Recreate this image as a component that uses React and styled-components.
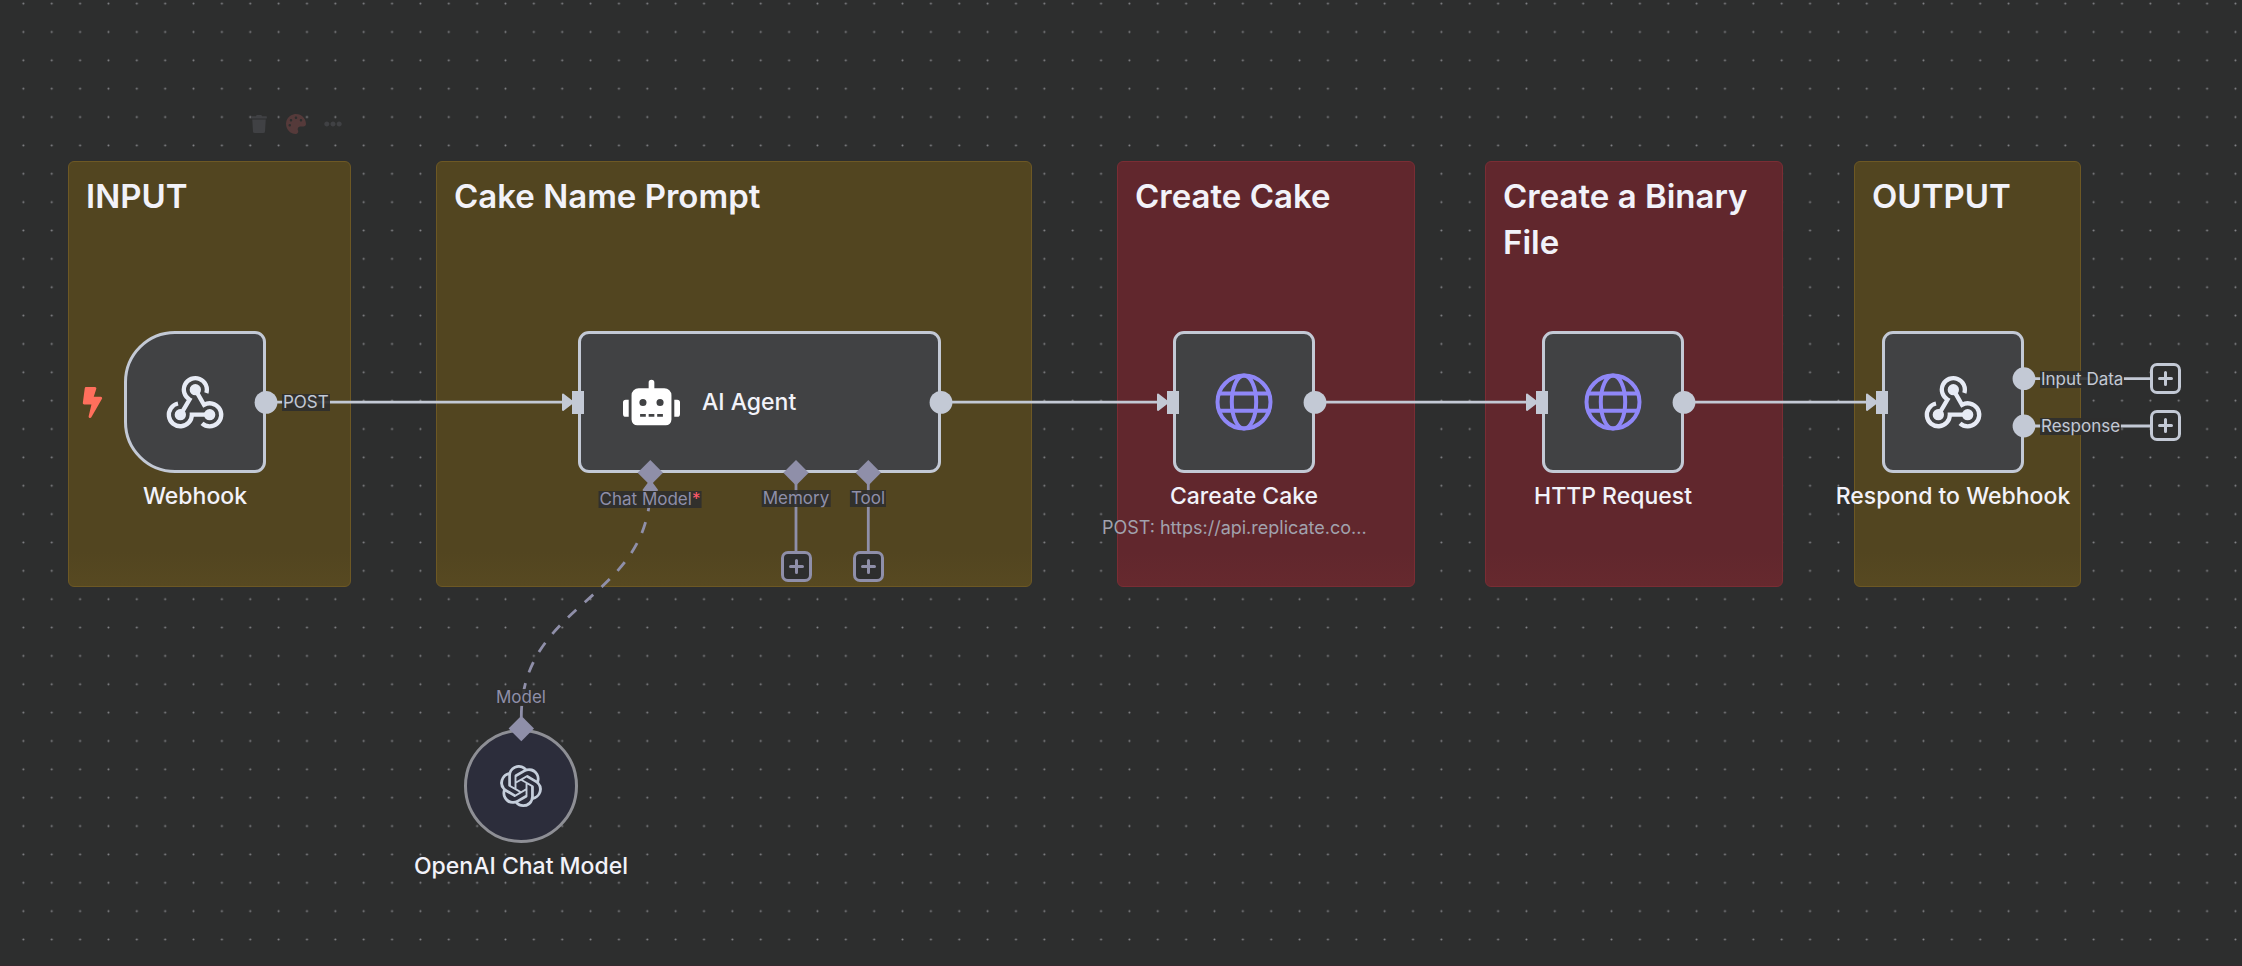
import React from "react";
import styled, { createGlobalStyle } from "styled-components";
import { FaBolt, FaRobot, FaTrash, FaPalette, FaEllipsisH } from "react-icons/fa";
import { SiOpenai } from "react-icons/si";

const GlobalStyle = createGlobalStyle`
  *, *::before, *::after { box-sizing: border-box; }
  body {
    margin: 0;
    background: #2d2e2e;
    font-family: Inter, "Liberation Sans", sans-serif;
  }
`;

const wire = "#c3c9d5";
const aux = "#8f8fa9";

const Canvas = styled.main`
  position: relative;
  width: 100%;
  min-height: 100vh;
  overflow: hidden;
  background: #2d2e2e;
  border-bottom: 1px solid #35292e;
`;

const Layer = styled.svg`
  position: absolute;
  inset: 0;
  width: 100%;
  height: 100%;
  pointer-events: none;
`;

const Placed = styled.div`
  position: absolute;
  left: ${(p) => p.$x}px;
  top: ${(p) => p.$y}px;
`;

const Sticky = styled(Placed).attrs({ as: "section" })`
  width: ${(p) => p.$w}px;
  height: 426px;
  padding: 11px 17px;
  border: 1px solid ${(p) => (p.$red ? "#7a2d34" : "#6d5824")};
  border-radius: 6px;
  background: ${(p) =>
    p.$red
      ? "linear-gradient(#61272d calc(100% - 34px), #66292e)"
      : "linear-gradient(#524520 calc(100% - 34px), #574921)"};
`;

const StickyTitle = styled.h2`
  margin: 0;
  font-size: 33px;
  line-height: 46px;
  font-weight: 600;
  color: #f2f2f9;
`;

const Toolbar = styled(Placed)`
  display: flex;
  gap: 17px;
`;

const ToolButton = styled.button`
  display: grid;
  place-items: center;
  width: 20px;
  height: 20px;
  padding: 0;
  border: 0;
  background: none;
  color: ${(p) => (p.$accent ? "#553a3a" : "#404144")};
  cursor: pointer;
`;

const NodeWrap = styled(Placed)`
  display: flex;
  flex-direction: column;
  align-items: center;
  width: ${(p) => p.$w}px;
`;

const NodeBox = styled.div`
  display: flex;
  align-items: center;
  justify-content: ${(p) => (p.$wide ? "flex-start" : "center")};
  gap: 22px;
  width: 100%;
  height: 142px;
  padding: ${(p) => (p.$wide ? "0 42px" : "0")};
  border: 3px solid ${wire};
  border-radius: ${(p) => (p.$trigger ? "51px 11px 11px 51px" : "11px")};
  background: #414244;
  color: ${(p) => p.$color || "#e7ebf5"};
`;

const RoundBox = styled(NodeBox)`
  height: 114px;
  border: 3px solid #8e8f95;
  border-radius: 50%;
  background: #2c2d3b;
  color: #c5cedb;
`;

const NodeName = styled.div`
  margin-top: ${(p) => (p.$inline ? 0 : 8)}px;
  font-size: 23px;
  line-height: 30px;
  font-weight: 500;
  white-space: nowrap;
  color: #f2f2f9;
`;

const NodeNote = styled.div`
  width: 284px;
  margin-top: 2px;
  font-size: 18px;
  line-height: 30px;
  white-space: nowrap;
  color: #a1a2ad;
`;

const PortLabel = styled(Placed)`
  padding: 0 1px;
  font-size: 17px;
  line-height: 17px;
  white-space: nowrap;
  color: ${(p) => (p.$aux ? aux : wire)};
  background: rgba(45, 46, 46, 0.9);
  transform: ${(p) => (p.$centered ? "translateX(-50%)" : "none")};
`;

const Required = styled.span`
  color: #ff5a6a;
`;

const AddButton = styled(Placed).attrs({ as: "button", type: "button" })`
  display: grid;
  place-items: center;
  width: 31px;
  height: 31px;
  padding: 0;
  border: 3px solid ${(p) => (p.$aux ? aux : wire)};
  border-radius: 7px;
  background: #2d2e2e;
  color: ${(p) => (p.$aux ? aux : wire)};
  cursor: pointer;
`;

const TriggerMark = styled(Placed)`
  display: flex;
  color: #ff6f5c;
`;

const PlusIcon = () => (
  <svg width="15" height="15" viewBox="0 0 15 15" stroke="currentColor" strokeWidth="3" strokeLinecap="round" aria-hidden="true">
    <path d="M7.5 1.5v12M1.5 7.5h12" />
  </svg>
);

const WebhookIcon = () => (
  <svg width="58" height="54" viewBox="319 194 174 162" fill="none" stroke="currentColor" aria-hidden="true">
    <g strokeWidth="13">
      <path d="M440 248A34.500 34.500 0 1 0 389.500 267.500L365 309" />
      <path d="M407 238L433 283.500A34.500 34.500 0 1 1 427 339" />
      <path d="M355 279.500A34.500 34.500 0 1 0 396.500 313H446" />
    </g>
    <g fill="currentColor" stroke="none">
      <circle cx="407" cy="238" r="17" />
      <circle cx="362" cy="313" r="17" />
      <circle cx="450" cy="313" r="17" />
    </g>
  </svg>
);

const GlobeIcon = () => (
  <svg width="58" height="58" viewBox="0 0 58 58" fill="none" stroke="currentColor" strokeWidth="4" aria-hidden="true">
    <circle cx="29" cy="29" r="26.500" />
    <ellipse cx="29" cy="29" rx="12.200" ry="26.500" />
    <path d="M5 20.400h48M5 37.800h48" />
  </svg>
);

const Grid = () => (
  <Layer aria-hidden="true">
    <defs>
      <pattern id="dots" width="28.36" height="28.36" x="9.2" y="17.8" patternUnits="userSpaceOnUse">
        <circle cx="14.180" cy="14.180" r="1" fill="#85868a" />
      </pattern>
    </defs>
    <rect width="100%" height="100%" fill="url(#dots)" />
  </Layer>
);

const links = [
  { from: 266, to: 578 },
  { from: 941, to: 1173 },
  { from: 1315, to: 1542 },
  { from: 1684, to: 1882 },
];

const Edges = () => (
  <Layer aria-hidden="true">
    <g stroke={wire} strokeWidth="2.800" fill="none">
      {links.map((l) => (
        <path key={l.from} d={`M${l.from} 402.200H${l.to - 10}`} />
      ))}
      <path d="M2024 378.700H2151M2024 426H2151" />
    </g>
    <g fill={wire} stroke={wire} strokeWidth="2" strokeLinejoin="round">
      {links.map((l) => (
        <path key={l.to} d={`M${l.to - 15} 394.500L${l.to - 5} 402.300L${l.to - 15} 410Z`} />
      ))}
    </g>
    <g stroke={aux} strokeWidth="2.800" fill="none">
      <path d="M796 473V552M868.300 473V552" />
      <path d="M521.300 717C521.300 601 650.300 601 650.300 487" strokeDasharray="11.340" />
    </g>
    <path d="M650.300 481L657 490H643.600Z" fill={aux} stroke={aux} strokeWidth="2" strokeLinejoin="round" />
  </Layer>
);

const Handles = () => (
  <Layer aria-hidden="true">
    <g fill={wire}>
      {links.map((l) => (
        <g key={l.from}>
          <circle cx={l.from} cy="402.400" r="11.400" />
          <rect x={l.to - 6} y="391" width="12" height="23" />
        </g>
      ))}
      <circle cx="2024" cy="378.700" r="11.400" />
      <circle cx="2024" cy="426" r="11.400" />
    </g>
    <g fill={aux}>
      {[[650.3, 472.7], [796, 472.7], [868.3, 472.7], [521.3, 728.5]].map(([x, y]) => (
        <path key={x} d={`M${x} ${y - 12.7}l12.700 12.700l-12.700 12.700l-12.700 -12.700Z`} />
      ))}
    </g>
  </Layer>
);

const stickies = [
  { title: "INPUT", x: 68, w: 283 },
  { title: "Cake Name Prompt", x: 436, w: 596 },
  { title: "Create Cake", x: 1117, w: 298, red: true },
  { title: "Create a Binary File", x: 1485, w: 298, red: true },
  { title: "OUTPUT", x: 1854, w: 227 },
];

export default function App() {
  return (
    <>
      <GlobalStyle />
      <Canvas>
        <Grid />

        {stickies.map((s) => (
          <Sticky key={s.title} $x={s.x} $y={161} $w={s.w} $red={s.red}>
            <StickyTitle>{s.title}</StickyTitle>
          </Sticky>
        ))}

        <Toolbar $x={249} $y={114}>
          <ToolButton type="button" aria-label="Delete note"><FaTrash size={18} /></ToolButton>
          <ToolButton type="button" aria-label="Change color" $accent><FaPalette size={20} /></ToolButton>
          <ToolButton type="button" aria-label="More options"><FaEllipsisH size={18} /></ToolButton>
        </Toolbar>

        <Edges />

        <TriggerMark $x={77} $y={387}><FaBolt size={31} /></TriggerMark>

        <NodeWrap $x={124} $y={331} $w={142}>
          <NodeBox $trigger><WebhookIcon /></NodeBox>
          <NodeName>Webhook</NodeName>
        </NodeWrap>

        <NodeWrap $x={578} $y={331} $w={363}>
          <NodeBox $wide $color="#ffffff">
            <FaRobot size={57} />
            <NodeName $inline>AI Agent</NodeName>
          </NodeBox>
        </NodeWrap>

        <NodeWrap $x={1173} $y={331} $w={142}>
          <NodeBox $color="#8f87f7"><GlobeIcon /></NodeBox>
          <NodeName>Careate Cake</NodeName>
          <NodeNote>POST: https://api.replicate.co...</NodeNote>
        </NodeWrap>

        <NodeWrap $x={1542} $y={331} $w={142}>
          <NodeBox $color="#8f87f7"><GlobeIcon /></NodeBox>
          <NodeName>HTTP Request</NodeName>
        </NodeWrap>

        <NodeWrap $x={1882} $y={331} $w={142}>
          <NodeBox><WebhookIcon /></NodeBox>
          <NodeName>Respond to Webhook</NodeName>
        </NodeWrap>

        <NodeWrap $x={464} $y={729} $w={114}>
          <RoundBox><SiOpenai size={42} /></RoundBox>
          <NodeName>OpenAI Chat Model</NodeName>
        </NodeWrap>

        <Handles />

        <PortLabel $x={282} $y={394}>POST</PortLabel>
        <PortLabel $x={650} $y={491} $aux $centered>Chat Model<Required>*</Required></PortLabel>
        <PortLabel $x={796} $y={490} $aux $centered>Memory</PortLabel>
        <PortLabel $x={868} $y={490} $aux $centered>Tool</PortLabel>
        <PortLabel $x={521} $y={689} $aux $centered>Model</PortLabel>
        <PortLabel $x={2040} $y={371}>Input Data</PortLabel>
        <PortLabel $x={2040} $y={418}>Response</PortLabel>

        <AddButton $x={781} $y={551} $aux aria-label="Add memory"><PlusIcon /></AddButton>
        <AddButton $x={853} $y={551} $aux aria-label="Add tool"><PlusIcon /></AddButton>
        <AddButton $x={2150} $y={363} aria-label="Add node after input data"><PlusIcon /></AddButton>
        <AddButton $x={2150} $y={410} aria-label="Add node after response"><PlusIcon /></AddButton>
      </Canvas>
    </>
  );
}
